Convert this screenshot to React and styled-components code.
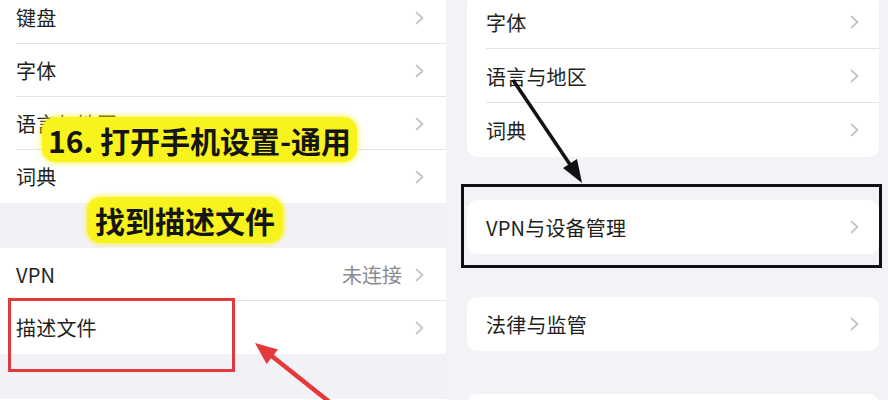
import styled, { createGlobalStyle } from "styled-components";

const GlobalStyle = createGlobalStyle`
  html, body {
    margin: 0;
    padding: 0;
    background: #f2f2f7;
  }
  body {
    font-family: "Noto Sans CJK SC", "Noto Sans", sans-serif;
    color: #1f1f21;
  }
`;

const Stage = styled.div`
  position: relative;
  width: 888px;
  height: 400px;
  overflow: hidden;
  display: grid;
  grid-template-columns: 446px 442px;
  background: #f2f2f7;
`;

const LeftPane = styled.div`
  display: flex;
  flex-direction: column;
  gap: 45px;
  margin-top: -9px;
  background: #f2f2f6;
`;

const Group = styled.div`
  background: #fff;
`;

const Row = styled.div`
  position: relative;
  height: 53px;
  display: flex;
  align-items: center;
  padding: 0 22px 0 16px;
  font-size: 20px;

  &:not(:last-child)::after {
    content: "";
    position: absolute;
    left: 16px;
    right: 0;
    bottom: 0;
    height: 1px;
    background: #e3e3e7;
  }
`;

const Label = styled.span`
  flex: 1;
  letter-spacing: 0.2px;
`;

const Value = styled.span`
  color: #8c8c91;
  margin-right: 13px;
`;

const RightPane = styled.div`
  display: flex;
  flex-direction: column;
  gap: 43px;
  margin-top: -5px;
  padding: 0 9px 0 21px;
`;

const CardWrap = styled.div`
  position: relative;
`;

const Card = styled.div`
  background: #fff;
  border-radius: 10px;
  overflow: hidden;
`;

const CardRow = styled(Row)`
  height: 54px;
  padding: 0 20px 0 19px;

  &:not(:last-child)::after {
    left: 19px;
  }
`;

const RedBox = styled.div`
  position: absolute;
  left: 8px;
  top: -3px;
  width: 227px;
  height: 74px;
  box-sizing: border-box;
  border: 3px solid #e2393c;
`;

const BlackBox = styled.div`
  position: absolute;
  left: -6px;
  right: -3px;
  top: -16px;
  bottom: -14px;
  border: 3px solid #111;
`;

const Callout = styled.div`
  position: absolute;
  top: ${(p) => p.$top}px;
  left: ${(p) => p.$left}px;
  height: ${(p) => p.$height}px;
  padding: 0 ${(p) => p.$pad}px;
  display: flex;
  align-items: center;
  background: #f8f31c;
  border-radius: 14px;
  box-shadow: 0 0 4px 2px rgba(248, 243, 28, 0.6);
  font-size: 30px;
  font-weight: 700;
  color: #151515;
  white-space: nowrap;
`;

const Arrows = styled.svg`
  position: absolute;
  inset: 0;
  pointer-events: none;
`;

function Chevron() {
  return (
    <svg width="9" height="14" viewBox="0 0 9 14">
      <polyline
        points="1.5,1.5 7.5,7 1.5,12.5"
        fill="none"
        stroke="#c5c5c9"
        strokeWidth="1.8"
        strokeLinecap="round"
        strokeLinejoin="round"
      />
    </svg>
  );
}

function Item({ as: Comp = Row, label, value, children }) {
  return (
    <Comp>
      <Label>{label}</Label>
      {value && <Value>{value}</Value>}
      <Chevron />
      {children}
    </Comp>
  );
}

export default function App() {
  return (
    <>
      <GlobalStyle />
      <Stage>
        <LeftPane>
          <Group>
            <Item label="键盘" />
            <Item label="字体" />
            <Item label="语言与地区" />
            <Item label="词典" />
          </Group>
          <Group>
            <Item label="VPN" value="未连接" />
            <Item label="描述文件">
              <RedBox />
            </Item>
          </Group>
          <Group>
            <Item label="" />
          </Group>
        </LeftPane>

        <RightPane>
          <Card>
            <Item as={CardRow} label="字体" />
            <Item as={CardRow} label="语言与地区" />
            <Item as={CardRow} label="词典" />
          </Card>
          <CardWrap>
            <BlackBox />
            <Card>
              <Item as={CardRow} label="VPN与设备管理" />
            </Card>
          </CardWrap>
          <Card>
            <Item as={CardRow} label="法律与监管" />
          </Card>
          <Card>
            <Item as={CardRow} label="" />
          </Card>
        </RightPane>

        <Callout $top={117} $left={42} $height={45} $pad={6}>
          16. 打开手机设置-通用
        </Callout>
        <Callout $top={197} $left={87} $height={46} $pad={8}>
          找到描述文件
        </Callout>

        <Arrows width="888" height="400" viewBox="0 0 888 400">
          <line x1="513" y1="80" x2="571" y2="166" stroke="#111" strokeWidth="3.5" />
          <polygon points="582,183 577,159 563,168" fill="#111" />
          <line x1="332" y1="404" x2="268" y2="353" stroke="#e5383b" strokeWidth="4.5" />
          <polygon points="255,343 278,349.6 266.6,364" fill="#e5383b" />
        </Arrows>
      </Stage>
    </>
  );
}
